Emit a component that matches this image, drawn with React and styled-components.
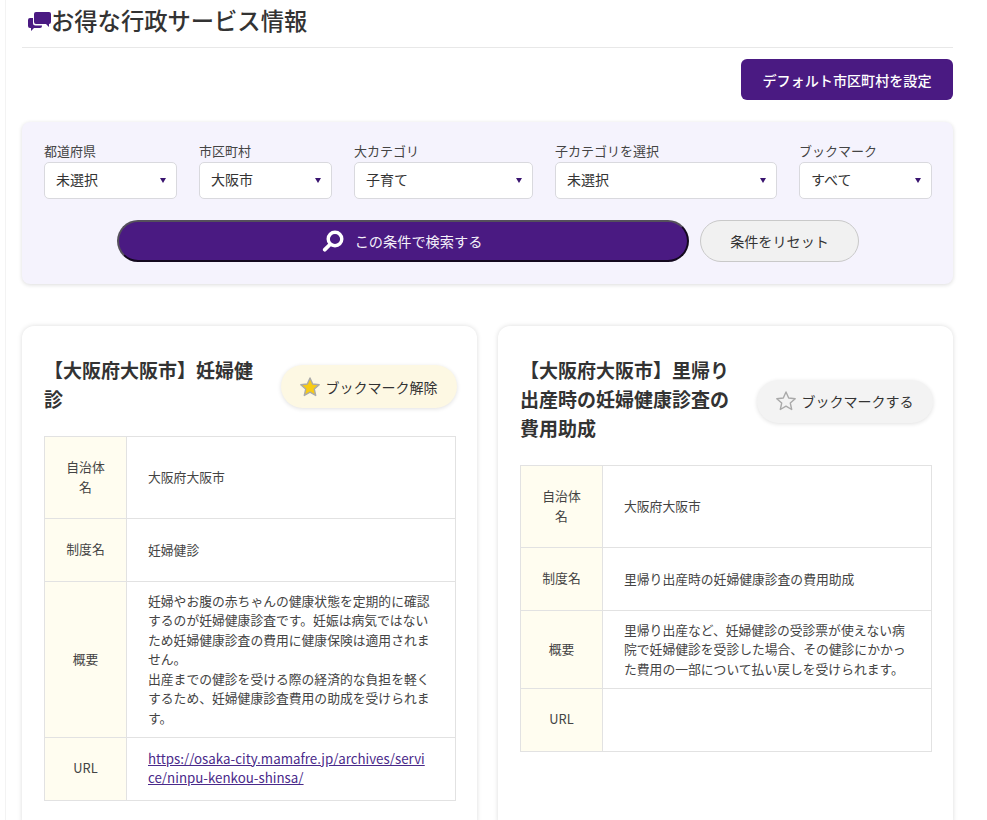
import React from 'react';
import styled, { createGlobalStyle } from 'styled-components';

const purple = '#4a1a82';

const GlobalStyle = createGlobalStyle`
  html, body {
    margin: 0;
    background: #fff;
    overflow: hidden;
    height: 820px;
  }
  body, select, button {
    font-family: "Noto Sans CJK JP", "Noto Sans", sans-serif;
  }
  * { box-sizing: border-box; }
`;

const prefs = [
  { label: '都道府県', value: '未選択', width: 133 },
  { label: '市区町村', value: '大阪市', width: 133 },
  { label: '大カテゴリ', value: '子育て', width: 179 },
  { label: '子カテゴリを選択', value: '未選択', width: 222 },
  { label: 'ブックマーク', value: 'すべて', width: 133 },
];

const cards = [
  {
    title: '【大阪府大阪市】妊婦健診',
    marked: true,
    rows: [
      ['自治体名', '大阪府大阪市'],
      ['制度名', '妊婦健診'],
      ['概要', '妊婦やお腹の赤ちゃんの健康状態を定期的に確認するのが妊婦健康診査です。妊娠は病気ではないため妊婦健康診査の費用に健康保険は適用されません。\n出産までの健診を受ける際の経済的な負担を軽くするため、妊婦健康診査費用の助成を受けられます。'],
      ['URL', 'https://osaka-city.mamafre.jp/archives/service/ninpu-kenkou-shinsa/'],
    ],
  },
  {
    title: '【大阪府大阪市】里帰り出産時の妊婦健康診査の費用助成',
    marked: false,
    rows: [
      ['自治体名', '大阪府大阪市'],
      ['制度名', '里帰り出産時の妊婦健康診査の費用助成'],
      ['概要', '里帰り出産など、妊婦健診の受診票が使えない病院で妊婦健診を受診した場合、その健診にかかった費用の一部について払い戻しを受けられます。'],
      ['URL', ''],
    ],
  },
];

const App = () => (
  <Page>
    <GlobalStyle />
    <Heading>
      <ChatIcon />
      お得な行政サービス情報
    </Heading>

    <DefaultRow>
      <DefaultButton>デフォルト市区町村を設定</DefaultButton>
    </DefaultRow>

    <SearchPanel>
      <Filters>
        {prefs.map(item => (
          <Filter key={item.label} $width={item.width}>
            <FilterLabel>{item.label}</FilterLabel>
            <SelectWrap>
              <Select defaultValue={item.value}>
                <option>{item.value}</option>
              </Select>
            </SelectWrap>
          </Filter>
        ))}
      </Filters>
      <Actions>
        <SearchButton>
          <SearchIcon />
          この条件で検索する
        </SearchButton>
        <ResetButton>条件をリセット</ResetButton>
      </Actions>
    </SearchPanel>

    <CardGrid>
      {cards.map(card => (
        <Card key={card.title}>
          <CardHeader>
            <CardTitle>{card.title}</CardTitle>
            <BookmarkButton $marked={card.marked}>
              <StarIcon marked={card.marked} />
              {card.marked ? 'ブックマーク解除' : 'ブックマークする'}
            </BookmarkButton>
          </CardHeader>
          <InfoTable>
            <tbody>
              {card.rows.map(([name, value]) => (
                <tr key={name}>
                  <InfoHead>{name}</InfoHead>
                  <InfoCell>
                    {name === 'URL' && value ? <UrlLink href={value}>{value}</UrlLink> : value}
                  </InfoCell>
                </tr>
              ))}
            </tbody>
          </InfoTable>
        </Card>
      ))}
    </CardGrid>
  </Page>
);

const ChatIcon = () => (
  <svg width="24" height="20" viewBox="0 0 24 20" aria-hidden="true">
    <path fill={purple} d="M9 1h13a2 2 0 0 1 2 2v8a2 2 0 0 1-2 2v3l-3-3H9a2 2 0 0 1-2-2V3a2 2 0 0 1 2-2z" />
    <path fill={purple} d="M3 7h3v5a2.500 2.500 0 0 0 2.500 2.500H15V15a2 2 0 0 1-2 2H7l-3 3v-3H3a2 2 0 0 1-2-2V9a2 2 0 0 1 2-2z" />
  </svg>
);

const SearchIcon = () => (
  <svg width="22" height="22" viewBox="0 0 22 22" aria-hidden="true" fill="none" stroke="#fff">
    <circle cx="13" cy="9" r="6.800" strokeWidth="3.400" />
    <path d="M8 14.500 2.800 19.700" strokeWidth="3.800" strokeLinecap="round" />
  </svg>
);

const StarIcon = ({ marked }) => (
  <svg width="22" height="22" viewBox="0 0 22 22" aria-hidden="true">
    <path
      d="M11 2l2.700 6 6.500.7-4.900 4.400 1.400 6.400L11 16.200 5.300 19.500l1.400-6.400L1.800 8.700 8.300 8z"
      fill={marked ? '#f7cb15' : 'none'}
      stroke="#a9a9a9"
      strokeWidth="1.400"
      strokeLinejoin="round"
    />
  </svg>
);

const Page = styled.div`
  padding: 0 34px 0 22px;
  color: #333;
  min-height: 820px;
  background: linear-gradient(to right, #fff 5px, #f3f3f3 5px, #f3f3f3 6px, #fff 6px);
`;

const Heading = styled.h1`
  display: flex;
  align-items: center;
  height: 48px;
  margin: 0;
  padding: 0 0 6px 5px;
  border-bottom: 1px solid #e8e8e8;
  font-size: 23.300px;
  font-weight: 500;
  color: #333;
  line-height: 1;
`;

const DefaultRow = styled.div`
  display: flex;
  justify-content: flex-end;
  margin-top: 11px;
`;

const DefaultButton = styled.button`
  width: 212px;
  height: 41px;
  border: 0;
  border-radius: 6px;
  background: ${purple};
  color: #fff;
  font-size: 14.100px;
  font-weight: 500;
  padding: 0;
`;

const SearchPanel = styled.section`
  margin-top: 22px;
  height: 162px;
  padding: 19px 21px 0 22px;
  background: #f5f3fd;
  border-radius: 8px;
  box-shadow: 0 1px 4px rgba(0, 0, 0, 0.14);
`;

const Filters = styled.div`
  display: flex;
  gap: 22px;
`;

const Filter = styled.label`
  display: block;
  width: ${p => p.$width}px;
`;

const FilterLabel = styled.div`
  font-size: 13px;
  line-height: 19px;
  height: 21px;
  color: #444;
`;

const SelectWrap = styled.div`
  position: relative;

  &::after {
    content: '';
    position: absolute;
    right: 11px;
    top: 16px;
    border-left: 3.500px solid transparent;
    border-right: 3.500px solid transparent;
    border-top: 5px solid #3a1570;
    pointer-events: none;
  }
`;

const Select = styled.select`
  display: block;
  width: 100%;
  height: 37px;
  padding: 0 11px 4px;
  appearance: none;
  background: #fff;
  border: 1px solid #d9d9de;
  border-radius: 5px;
  color: #333;
  font-size: 14px;
`;

const Actions = styled.div`
  display: flex;
  gap: 11px;
  margin: 21px 0 0 73px;
`;

const SearchButton = styled.button`
  display: flex;
  align-items: center;
  justify-content: center;
  gap: 11px;
  width: 572px;
  height: 42px;
  padding: 0 2px 0 0;
  background: ${purple};
  border: 2px solid;
  border-color: #55505c #14091f #14091f #55505c;
  border-radius: 21px;
  color: #f4f0fa;
  font-size: 14.200px;
`;

const ResetButton = styled.button`
  width: 159px;
  height: 42px;
  padding: 0;
  background: #f1f1f1;
  border: 1px solid #c9c9c9;
  border-radius: 21px;
  color: #333;
  font-size: 14.100px;
`;

const CardGrid = styled.div`
  display: grid;
  grid-template-columns: 455px 455px;
  justify-content: space-between;
  margin-top: 42px;
`;

const Card = styled.article`
  padding: 29px 21px 30px 22px;
  background: #fff;
  border-radius: 12px;
  box-shadow: 0 0 5px rgba(0, 0, 0, 0.14);
`;

const CardHeader = styled.header`
  display: flex;
  align-items: center;
  justify-content: space-between;
  gap: 24px;
  margin-bottom: 23px;
`;

const CardTitle = styled.h2`
  flex: 1;
  margin: 0;
  font-size: 19px;
  font-weight: 700;
  line-height: 29px;
  color: #333;
`;

const BookmarkButton = styled.button`
  display: flex;
  align-items: center;
  justify-content: center;
  gap: 5px;
  flex-shrink: 0;
  width: 176px;
  height: 43px;
  margin: 5px -1px 0 0;
  padding: 0 2px 0 0;
  border: 0;
  border-radius: 22px;
  background: ${p => (p.$marked ? '#fdf8e3' : '#f3f3f3')};
  box-shadow: 0 1px 4px rgba(0, 0, 0, 0.12);
  color: #333;
  font-size: 14px;
`;

const InfoTable = styled.table`
  width: 100%;
  border-collapse: collapse;
  table-layout: fixed;
  font-size: 12.800px;
  line-height: 19.500px;
  color: #444;
`;

const InfoHead = styled.th`
  width: 82px;
  padding: 20px 15px 22px;
  background: #fffdf0;
  border: 1px solid #e2e2e2;
  font-weight: 400;
  text-align: center;
`;

const InfoCell = styled.td`
  padding: 9px 24px 10px 21px;
  border: 1px solid #e2e2e2;
  white-space: pre-line;
  word-break: break-all;
  line-break: strict;
`;

const UrlLink = styled.a`
  color: #4a2a8a;
  font-size: 13.330px;
`;

export default App;
